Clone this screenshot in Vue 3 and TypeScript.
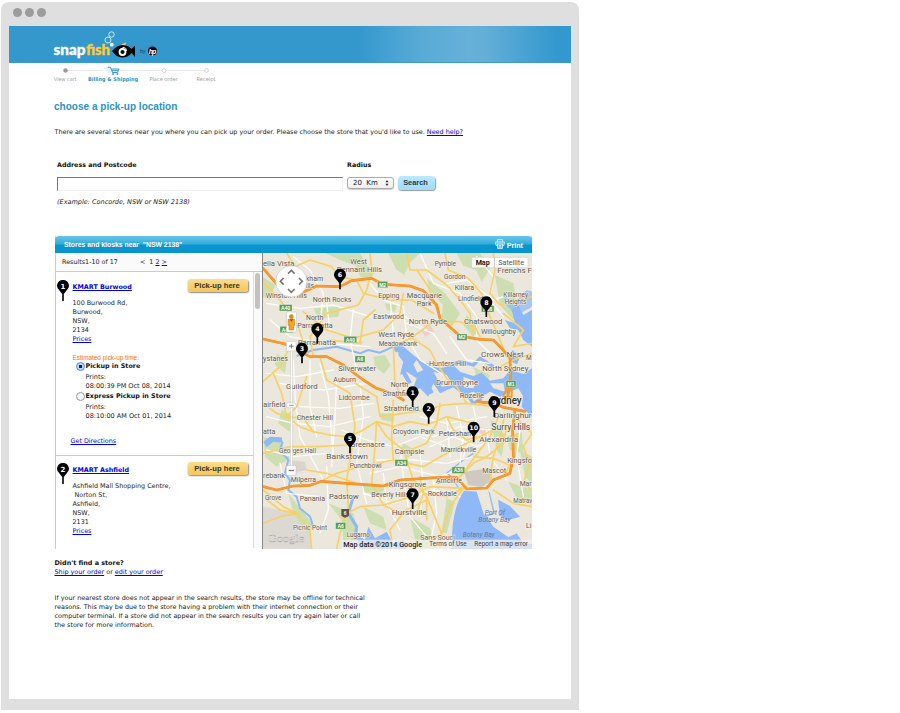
<script setup lang="ts">
interface MapLabel {
  t: string
  x: number
  y: number
  w: number
  s?: number
  k?: string
}
interface Pin {
  n: number
  x: number
  y: number
}

const footerLines: string[] = [
  'If your nearest store does not appear in the search results, the store may be offline for technical',
  'reasons. This may be due to the store having a problem with their internet connection or their',
  'computer terminal. If a store did not appear in the search results you can try again later or call',
  'the store for more information.',
]
const burwood: string[] = ['100 Burwood Rd,', 'Burwood,', 'NSW,', '2134']
const ashfield: string[] = ['Ashfield Mall Shopping Centre,', '\u00a0Norton St,', 'Ashfield,', 'NSW,', '2131']

const labels: MapLabel[] = [
  { t: 'ella Vista', x: 9, y: 47, w: 94 },
  { t: 'West', x: 271, y: 41, w: 50 },
  { t: 'Pennant Hills', x: 230, y: 66, w: 136 },
  { t: 'Baulkham', x: 97, y: 92, w: 92 },
  { t: 'Hills', x: 122, y: 114, w: 40 },
  { t: 'Winston Hills', x: 17, y: 145, w: 124 },
  { t: 'North Rocks', x: 158, y: 155, w: 116 },
  { t: 'Pymble', x: 524, y: 48, w: 64, s: 20 },
  { t: 'Frenchs F', x: 712, y: 68, w: 104 },
  { t: 'Gordon', x: 552, y: 87, w: 64, s: 20 },
  { t: 'Killara', x: 584, y: 121, w: 58, s: 20 },
  { t: 'Lindfield', x: 594, y: 153, w: 76, s: 20 },
  { t: 'Killarney', x: 730, y: 141, w: 74, s: 20 },
  { t: 'Heights', x: 734, y: 162, w: 65, s: 20 },
  { t: 'Epping', x: 355, y: 145, w: 63 },
  { t: 'Macquarie', x: 440, y: 143, w: 106 },
  { t: 'Park', x: 470, y: 167, w: 45 },
  { t: 'North', x: 138, y: 211, w: 52 },
  { t: 'Parramatta', x: 112, y: 234, w: 106 },
  { t: 'Parramatta', x: 113, y: 286, w: 115 },
  { t: 'Eastwood', x: 340, y: 207, w: 92 },
  { t: 'North Ryde', x: 446, y: 221, w: 115, s: 23 },
  { t: 'Chatswood', x: 612, y: 222, w: 115, s: 23 },
  { t: 'Willoughby', x: 663, y: 252, w: 105 },
  { t: 'West Ryde', x: 355, y: 261, w: 107, s: 23 },
  { t: 'Meadowbank', x: 356, y: 288, w: 116, s: 20 },
  { t: 'Crows Nest', x: 663, y: 320, w: 128, s: 23 },
  { t: 'M', x: 798, y: 331, w: 17 },
  { t: 'ystanes', x: 9, y: 334, w: 75 },
  { t: 'Silverwater', x: 235, y: 362, w: 113 },
  { t: 'Hunters Hill', x: 507, y: 347, w: 112 },
  { t: 'North Sydney', x: 667, y: 364, w: 138, s: 23 },
  { t: 'Auburn', x: 220, y: 397, w: 68 },
  { t: 'Guildford', x: 78, y: 417, w: 95 },
  { t: 'North', x: 392, y: 412, w: 52 },
  { t: 'Strathfield', x: 368, y: 437, w: 98 },
  { t: 'Drummoyne', x: 528, y: 405, w: 126 },
  { t: 'Lidcombe', x: 236, y: 450, w: 93 },
  { t: 'Rozelle', x: 599, y: 445, w: 73 },
  { t: 'Sydney', x: 690, y: 463, w: 95, s: 30, k: 'city' },
  { t: 'airfield', x: 10, y: 471, w: 66 },
  { t: 'Strathfield', x: 371, y: 484, w: 106, s: 23 },
  { t: 'Chester Hill', x: 110, y: 511, w: 109 },
  { t: 'Darlinghur', x: 701, y: 505, w: 114, s: 23 },
  { t: 'Surry Hills', x: 694, y: 541, w: 117, s: 25, k: 'dark' },
  { t: 'atta', x: 9, y: 553, w: 37 },
  { t: 'Croydon Park', x: 398, y: 553, w: 126 },
  { t: 'Petersham', x: 536, y: 557, w: 104 },
  { t: 'Alexandria', x: 658, y: 575, w: 117, s: 23 },
  { t: 'Greenacre', x: 271, y: 592, w: 103 },
  { t: 'Georges Hall', x: 57, y: 610, w: 111, s: 19 },
  { t: 'Campsie', x: 404, y: 611, w: 89, s: 23 },
  { t: 'Marrickville', x: 542, y: 605, w: 107 },
  { t: 'Bankstown', x: 199, y: 627, w: 125, s: 24 },
  { t: 'Punchbowl', x: 269, y: 653, w: 96, s: 20 },
  { t: 'Kingsfo', x: 742, y: 640, w: 74 },
  { t: 'Mascot', x: 667, y: 668, w: 71 },
  { t: 'rebank', x: 9, y: 683, w: 66 },
  { t: 'Milperra', x: 92, y: 697, w: 76 },
  { t: 'Kingsgrove', x: 386, y: 711, w: 113, s: 23 },
  { t: 'Arncliffe', x: 528, y: 698, w: 78 },
  { t: 'Mar', x: 779, y: 709, w: 36 },
  { t: 'Grove', x: 15, y: 751, w: 49, s: 19 },
  { t: 'Panania', x: 119, y: 752, w: 76 },
  { t: 'Padstow', x: 207, y: 746, w: 89, s: 23 },
  { t: 'Beverly Hills', x: 334, y: 740, w: 113 },
  { t: 'Rockdale', x: 503, y: 738, w: 87 },
  { t: 'Matrav', x: 760, y: 760, w: 57, s: 19 },
  { t: 'Hurstville', x: 395, y: 795, w: 105, s: 24 },
  { t: 'Port Of', x: 674, y: 795, w: 61, s: 20, k: 'bay' },
  { t: 'Botany Bay', x: 655, y: 817, w: 97, s: 20, k: 'bay' },
  { t: 'Botany Bay', x: 608, y: 862, w: 96, s: 20, k: 'bay' },
  { t: 'Picnic Point', x: 99, y: 839, w: 102, s: 19 },
  { t: 'Li', x: 798, y: 834, w: 16, s: 19 },
  { t: 'Lugarno', x: 260, y: 860, w: 70, s: 20 },
  { t: 'Sans Souci', x: 481, y: 871, w: 104 },
]

const shields: MapLabel[] = [
  { t: 'A40', x: 58, y: 164, w: 38 },
  { t: 'A40', x: 60, y: 229, w: 38 },
  { t: 'M2', x: 353, y: 94, w: 30 },
  { t: 'M2', x: 591, y: 252, w: 30 },
  { t: 'A40', x: 252, y: 259, w: 38 },
  { t: 'A6', x: 285, y: 318, w: 30 },
  { t: 'A38', x: 664, y: 167, w: 38 },
  { t: 'M1', x: 738, y: 392, w: 30 },
  { t: 'A34', x: 405, y: 629, w: 38 },
  { t: 'A36', x: 576, y: 651, w: 38 },
  { t: 'A6', x: 227, y: 818, w: 30 },
]

const pins: Pin[] = [
  { n: 6, x: 240, y: 74 },
  { n: 8, x: 679, y: 157 },
  { n: 4, x: 172, y: 237 },
  { n: 3, x: 126, y: 296 },
  { n: 1, x: 458, y: 427 },
  { n: 2, x: 506, y: 477 },
  { n: 9, x: 703, y: 457 },
  { n: 10, x: 641, y: 533 },
  { n: 5, x: 270, y: 566 },
  { n: 7, x: 458, y: 733 },
]

const parks: string[] = [
  'M195 9 L300 9 320 45 345 65 330 92 300 80 288 48 240 30Z',
  'M385 9 L480 9 450 38 432 75 408 58Z',
  'M590 9 L660 9 690 55 665 95 648 60 610 48Z',
  'M705 75 L760 100 775 190 810 200 800 235 755 205 720 165 712 120Z',
  'M500 85 L555 130 600 190 570 240 545 200 548 165 510 120Z',
  'M160 175 L240 170 235 200 175 205Z',
  'M375 160 L410 165 405 185 380 180Z',
  'M620 195 L655 230 640 262 610 225Z',
  'M340 320 L375 315 392 345 372 372 345 350Z',
  'M50 310 L80 330 75 370 45 345Z',
  'M65 480 L100 500 88 545 55 520Z',
  'M10 560 L60 575 90 625 50 650 15 620Z',
  'M360 490 L400 490 402 515 365 510Z',
  'M560 745 L585 755 560 850 545 848Z',
  'M690 505 L735 555 725 620 710 600Z',
  'M740 560 L785 545 790 610 750 600Z',
  'M300 700 L380 715 355 735 310 725Z',
  'M85 730 L120 775 165 830 140 850 100 790Z',
  'M205 760 L280 790 300 870 250 880 245 810Z',
  'M310 770 L370 800 380 840 330 820Z',
  'M745 695 L816 720 816 765 770 745Z',
  'M430 580 L465 600 445 625 420 605Z',
  'M640 350 L690 375 680 400 650 380Z',
  'M780 600 L816 620 816 700 795 680Z',
  'M9 80 L45 105 30 150 9 140Z',
  'M450 800 L510 835 530 897 470 890Z',
]

const minor: string[] = [
  'M20 160 L120 175 220 165 330 200 420 190 500 240',
  'M30 210 L90 260 200 280 330 290',
  'M100 20 L150 60 190 130 180 230',
  'M330 100 L370 150 430 170 440 260 480 330 560 380',
  'M480 9 L520 100 600 130 650 200 650 270 690 310',
  'M560 100 L620 90 700 150 760 130',
  'M20 370 L110 380 220 360',
  'M100 330 L105 440 120 560 190 690',
  'M60 400 L190 420 320 400',
  'M150 330 L150 470 170 560',
  'M180 340 L205 440 220 620',
  'M230 390 L225 500 215 650',
  'M20 500 L100 520 210 530 330 500',
  'M120 470 L240 475 340 460',
  'M245 540 L320 570 400 590 480 560 560 590',
  'M300 400 L310 500 290 640 320 760',
  'M350 630 L460 630 560 640 640 620',
  'M330 670 L420 650 540 680 620 650',
  'M310 730 L400 760 520 720 600 740',
  'M370 670 L380 760 420 840',
  'M420 590 L430 680 450 800 500 860',
  'M480 610 L490 700 480 800',
  'M520 690 L530 790 510 880',
  'M400 540 L520 560 600 530 690 540',
  'M510 590 L580 560 650 590 720 560',
  'M560 500 L570 620',
  'M590 470 L610 560 600 640',
  'M640 470 L650 520 610 620',
  'M680 540 L690 620 740 690',
  'M480 500 L560 520 680 500',
  'M780 540 L770 620 790 740',
  'M570 260 L620 330 690 340',
  'M440 220 L520 250 560 310',
  'M200 160 L210 240',
  'M280 180 L270 270 290 360',
  'M650 20 L700 80 690 150 730 200',
  'M20 600 L100 620 200 610',
  'M60 640 L80 730 180 740',
  'M200 650 L205 780 180 850',
  'M390 140 L400 250',
]

const roads: string[] = [
  'M9 95 L60 150 115 230 140 310',
  'M80 9 L105 50 150 30 215 50 240 80 290 90 310 130 390 150 455 150 520 190',
  'M330 9 L335 60 320 120 295 165 200 190 150 260 160 320',
  'M440 9 L450 60 500 60 560 105 600 150 630 190 640 250',
  'M470 60 L505 110 535 190',
  'M555 9 L565 60 625 85 665 130 690 200 720 270 740 320',
  'M700 9 L705 60 690 130 720 165 816 140',
  'M660 260 L645 230 600 215 560 215 520 215 460 260 400 290 405 400 425 440',
  'M130 185 L200 240 280 265 370 240 420 190 430 130',
  'M210 270 L300 280 310 210 345 180',
  'M180 320 L200 390 270 430 285 530 275 600 260 690 265 770 240 850 230 897',
  'M9 460 L50 490 80 500 130 505 160 545 210 555 260 560 300 545 350 515 400 530 450 515 500 525 560 500 640 520',
  'M40 370 L65 430 80 500 120 530 160 545',
  'M9 610 L90 590 170 590 265 585',
  'M140 380 L110 470 80 500',
  'M9 395 L60 350 90 290',
  'M350 515 L345 590 335 700 370 765 420 790 500 750',
  'M350 515 L380 560 430 600 460 690 500 740 500 810',
  'M285 400 L350 440 360 500 430 490 500 480 550 465 620 460 700 470',
  'M400 450 L395 560 400 630 490 650 560 610 640 570 700 540',
  'M190 690 L230 670 300 650 400 630',
  'M140 660 L200 670 290 700 400 710',
  'M9 720 L70 770 110 790 150 840 155 897',
  'M110 790 L60 780 20 750',
  'M240 800 L300 770 370 765 440 745 510 710 610 715',
  'M610 715 L570 770 545 850 540 897',
  'M500 740 L520 790 545 850 480 897',
  'M430 790 L390 840 400 897',
  'M490 730 L560 740 620 710',
  'M590 690 L640 640 680 620 730 580 740 530',
  'M600 680 L660 600 690 560 720 490',
  'M640 620 L700 625 760 650',
  'M690 690 L700 620 720 560 735 490',
  'M560 500 L580 540 620 570 650 560',
  'M620 460 L590 410 560 385 530 340 510 300 450 260',
  'M540 460 L530 520 500 580 450 600',
  'M720 350 L760 330 816 310',
  'M765 500 L816 550 790 590 810 640 790 700 816 720',
  'M700 720 L760 760 816 770',
  'M770 550 L765 620 730 680',
  'M730 190 L790 240 760 290 816 280',
  'M480 680 L490 730 470 790 410 790',
  'M9 820 L60 800 110 790',
]

const motorways: string[] = [
  'M9 55 L40 90 70 125 130 126 170 108 240 110 275 92 335 85 370 103 450 108 490 122 530 165 540 205 600 258 660 268 700 270 725 295 750 325 752 400 740 450',
  'M9 267 L75 282 125 308 150 320 200 320 250 345 310 390 350 415 400 432 430 450',
  'M9 710 L50 720 100 708 150 706 185 694 260 700 370 708 420 690 540 682 590 682 620 717 680 714 700 690 750 670 760 620 758 540 765 480',
  'M652 455 L700 460 730 472 795 484',
]
</script>

<template>
  <div class="browser">
    <div class="chrome"><i></i><i></i><i></i></div>
    <div class="page">
      <header class="banner">
        <svg class="logo" viewBox="0 0 108 32" width="108" height="32">
          <text class="brand snap" x="0.500" y="24" textLength="32" lengthAdjust="spacingAndGlyphs">snap</text>
          <text class="brand fish" x="33" y="24" textLength="24" lengthAdjust="spacingAndGlyphs">fish</text>
          <g fill="none" stroke="#d9effb" stroke-width="0.900">
            <circle cx="58.500" cy="3.500" r="2.700" />
            <circle cx="55" cy="9" r="3" />
          </g>
          <circle cx="58.800" cy="13.700" r="1.900" fill="#fff" />
          <path d="M68 14 Q71 11.500 73 11.500 L72 16Z" fill="#fc3" />
          <path d="M59 20 Q64 14 70 14 Q76 14.500 78.500 18 L82 14.500 V26 L78.500 22 Q75 26.500 69 26.500 Q63 26 59 20Z" fill="#050505" />
          <circle cx="69.500" cy="21" r="3" fill="none" stroke="#fff" stroke-width="1.800" />
          <path d="M69.500 16.500 Q73.500 16 73.500 20" fill="none" stroke="#fff" stroke-width="0.900" />
          <text class="by" x="87" y="22" textLength="5.500">by</text>
          <circle cx="99.500" cy="20" r="4.600" fill="#070707" />
          <text class="hp" x="95.800" y="22.500" textLength="7.500">hp</text>
        </svg>
      </header>

      <main>
        <svg class="steps" viewBox="0 0 170 22" width="170" height="22">
          <path d="M12 5.500 H49 M66 5.500 H108 M112 5.500 H150" stroke="#ddd" stroke-width="0.700" />
          <circle cx="11.500" cy="5.500" r="2.200" fill="#999" />
          <circle cx="110" cy="5.500" r="1.900" fill="#fff" stroke="#ccc" stroke-width="0.900" />
          <circle cx="152.500" cy="5.500" r="1.900" fill="#fff" stroke="#ccc" stroke-width="0.900" />
          <path d="M50 3 H55 M52 5 H56 M54 7 H57" stroke="#bfe0f2" stroke-width="0.900" />
          <path d="M54 2.300 H56.500 L58.500 7.500 H63.500 L65 4 H57.500 M58 5.700 H64" fill="none" stroke="#2e93c8" stroke-width="1" />
          <circle cx="59" cy="9" r="0.900" fill="#2e93c8" /><circle cx="63.500" cy="9" r="0.900" fill="#2e93c8" />
          <text x="0" y="15.700" textLength="22.500" lengthAdjust="spacingAndGlyphs">View cart</text>
          <text class="on" x="34" y="15.700" textLength="50" lengthAdjust="spacingAndGlyphs">Billing &amp; Shipping</text>
          <text x="95.500" y="15.700" textLength="28" lengthAdjust="spacingAndGlyphs">Place order</text>
          <text x="142.500" y="15.700" textLength="19" lengthAdjust="spacingAndGlyphs">Receipt</text>
        </svg>

        <h1>choose a pick-up location</h1>
        <p class="intro">There are several stores near you where you can pick up your order. Please choose the store that you'd like to use. <a>Need help?</a></p>

        <form class="search" @submit.prevent>
          <div class="field address">
            <label>Address and Postcode</label>
            <div class="input"></div>
          </div>
          <div class="field">
            <label>Radius</label>
            <div class="controls">
              <div class="select"><span>20&nbsp; Km</span>
                <svg viewBox="0 0 4 6" width="4" height="6"><path d="M2 0 L3.600 2.300 H.4Z M2 6 L3.600 3.700 H.4Z" fill="#333" /></svg>
              </div>
              <button class="go">Search</button>
            </div>
          </div>
        </form>
        <p class="example">(Example: Concorde, NSW or NSW 2138)</p>

        <section class="panel">
          <div class="panel-head">
            <span>Stores and kiosks near &nbsp;"NSW 2138"</span>
            <span class="print">
              <svg viewBox="0 0 10 10" width="10" height="10"><path d="M2.500 3 V.6 H7.500 V3 M1.800 7 Q.6 7 .6 3 H9.400 Q9.400 7 8.200 7 M2.500 5 H7.500 V9.400 H2.500Z M4 6.500 H6 M4 8 H6" fill="#5bbce4" stroke="#d4effa" stroke-width="0.900" /></svg>
              <span>Print</span>
            </span>
          </div>
          <div class="panel-body">
            <div class="list">
              <div class="results"><span>Results1-10 of 17</span><span class="pager">&lt;&nbsp; 1 <a>2</a> <a>&gt;</a></span></div>
              <div class="scroll">
                <div class="items">
                  <article class="store first">
                    <svg class="marker" viewBox="0 0 12 21" width="12" height="21"><path d="M6 0 A5.800 5.800 0 0 1 9.500 10.500 L6.800 14 V21 H5.200 V14 L2.500 10.500 A5.800 5.800 0 0 1 6 0" /><text x="6" y="8.500">1</text></svg>
                    <div class="info">
                      <div class="top"><a class="name">KMART Burwood</a><button class="pick">Pick-up here</button></div>
                      <div v-for="l in burwood" :key="l">{{ l }}</div>
                      <div><a>Prices</a></div>
                      <div class="est">Estimated pick-up time:</div>
                      <div class="opt"><i class="radio checked"></i><b>Pickup in Store</b></div>
                      <div class="when">Prints:<br />08:00:39 PM Oct 08, 2014</div>
                      <div class="opt second"><i class="radio"></i><b>Express Pickup in Store</b></div>
                      <div class="when">Prints:<br />08:10:00 AM Oct 01, 2014</div>
                      <a class="directions">Get Directions</a>
                    </div>
                  </article>
                  <article class="store">
                    <svg class="marker" viewBox="0 0 12 21" width="12" height="21"><path d="M6 0 A5.800 5.800 0 0 1 9.500 10.500 L6.800 14 V21 H5.200 V14 L2.500 10.500 A5.800 5.800 0 0 1 6 0" /><text x="6" y="8.500">2</text></svg>
                    <div class="info">
                      <div class="top"><a class="name">KMART Ashfield</a><button class="pick">Pick-up here</button></div>
                      <div v-for="l in ashfield" :key="l">{{ l }}</div>
                      <div><a>Prices</a></div>
                    </div>
                  </article>
                </div>
                <div class="track"><i></i></div>
              </div>
            </div>

            <svg class="map" viewBox="9 9 807 888" width="269" height="296">
              <rect x="9" y="9" width="807" height="888" fill="#ebe7dc" />
              <path d="M9 770 L110 790 150 840 155 897 9 897Z" fill="#dcd9d2" />
              <path v-for="d in parks" :key="d" :d="d" fill="#cddfb0" />
              <g fill="#f0cfc8"><path d="M480 235 l28 -15 15 25 -28 15z M295 270 l15 5 -8 12z M660 530 l30 8 -8 22 -24 -10z" /></g>
              <g fill="#cfc9c0"><path d="M612 665 L690 655 697 690 665 712 625 705Z" /><path d="M85 630 l50 5 5 25 -40 10z" opacity="0.600" /></g>
              <g fill="#8fb8f6">
                <path d="M612 722 Q572 780 576 897 L816 897 816 882 790 880 770 850 745 862 700 830 680 800 705 790 745 810 780 800 750 768 700 742 685 722 700 790 672 795 650 725Z" />
                <path d="M395 290 L425 285 460 315 500 345 540 355 580 345 600 365 640 378 665 368 690 392 730 385 750 360 790 372 816 355 816 460 790 440 775 415 750 425 720 440 690 425 665 440 640 425 610 435 580 412 540 430 520 400 505 440 480 415 455 425 470 385 440 365 420 375 430 335Z" />
                <path d="M735 210 L765 220 755 180 775 165 790 195 816 180 816 290 790 270 775 240 750 235Z" />
                <path d="M730 135 L760 160 800 120 816 125 816 170 790 185 770 200 735 160Z" opacity="0.700" />
                <path d="M10 575 L30 560 65 562 68 578 40 575 20 592Z" />
                <path d="M285 850 L315 870 325 830 345 865 380 845 400 880 430 870 440 897 300 897Z" />
                <path d="M756 300 l25 18 -10 25 -22 -10z M640 405 l15 15 20 -10 -15 -12z" />
                <path d="M795 390 L816 380 816 500 785 470Z" />
              </g>
              <g fill="#ebe7dc">
                <path d="M520 365 L560 375 580 405 545 410Z M610 380 L650 395 640 415 612 412Z M690 400 L730 400 735 425 700 415Z M400 310 L415 305 415 360 403 350Z" />
                <path d="M690 730 L712 735 720 795 706 795Z M470 330 l20 30 -18 8 -12 -25z" />
              </g>
              <g fill="none" stroke="#8fb8f6" stroke-linejoin="round">
                <path d="M110 318 L160 300 230 290 300 310 325 300 360 308 400 290 430 300" stroke-width="6" />
                <path d="M68 575 L60 600 85 630 75 670 90 690 85 720 110 740 120 775 150 800 160 830" stroke-width="6" />
                <path d="M280 740 L265 790 290 830 285 870" stroke-width="9" />
                <path d="M425 300 L440 325 430 365 450 400 M505 340 L490 385 515 430" stroke-width="13" />
                <path d="M560 350 L600 335 640 345 660 325 700 350 M620 430 L640 460 665 445" stroke-width="10" />
                <path d="M590 690 L560 670 610 630 640 610 M530 700 L580 690 600 720" stroke-width="4" />
              </g>
              <g fill="none" stroke-linejoin="round" stroke-linecap="round">
                <path v-for="d in minor" :key="d" :d="d" stroke="#fdfcf8" stroke-width="4" />
                <path v-for="d in roads" :key="d" :d="d" stroke="#f7d164" stroke-width="5" />
                <path v-for="d in motorways" :key="d" :d="d" stroke="#e98c28" stroke-width="8" />
                <path v-for="d in motorways" :key="d + 'i'" :d="d" stroke="#f99a2b" stroke-width="6" />
                <path d="M730 440 L740 415 752 400 M730 440 H755 V410 M765 480 V500" stroke="#f99a2b" stroke-width="6" />
              </g>
              <g v-for="(s, i) in shields" :key="'s' + i">
                <rect :x="s.x" :y="s.y" :width="s.w" height="19" fill="#5a9c4f" stroke="#e5efdc" stroke-width="1" />
                <text class="shield" :x="s.x + s.w / 2" :y="s.y + 15.500">{{ s.t }}</text>
              </g>
              <path d="M244 777 H267 V795 Q267 800 255 803 Q244 800 244 795Z" fill="#5d5142" />
              <text class="shield" x="255.500" y="796">6</text>
              <text v-for="(l, i) in labels" :key="i" class="place" :class="l.k" :x="l.x" :y="l.y" :font-size="l.s ?? 21.5" :textLength="l.w" lengthAdjust="spacingAndGlyphs">{{ l.t }}</text>

              <g class="pan">
                <circle cx="94" cy="94" r="47" fill="#fff" stroke="#c9c6bf" stroke-width="2" />
                <path d="M84 71 L94 61 104 71 M84 117 L94 127 104 117 M71 84 L61 94 71 104 M117 84 L127 94 117 104" fill="none" stroke="#777" stroke-width="5" />
              </g>
              <g>
                <rect x="79" y="186" width="30" height="60" rx="3" fill="#fff" stroke="#bbb" stroke-width="1.500" />
                <circle cx="94" cy="200" r="7" fill="#e28a17" />
                <path d="M84 208 H104 V226 H101 V240 H87 V226 H84Z" fill="#f3a421" stroke="#b8701a" stroke-width="1.500" />
                <path d="M89 208 L94 216 99 208Z" fill="#b93e1a" />
              </g>
              <g>
                <rect x="92" y="300" width="5" height="352" fill="#fff" stroke="#bbb" stroke-width="1" />
                <rect x="79" y="274" width="29" height="29" rx="2" fill="#fff" stroke="#bbb" stroke-width="1.500" />
                <path d="M87 288.500 H101 M94 281.500 V295.500" stroke="#777" stroke-width="3" />
                <rect x="79" y="459" width="29" height="14" rx="2" fill="#fff" stroke="#bbb" stroke-width="1.500" />
                <path d="M87 466 H101" stroke="#999" stroke-width="3" />
                <rect x="79" y="647" width="29" height="29" rx="2" fill="#fff" stroke="#bbb" stroke-width="1.500" />
                <path d="M86 661.500 H102" stroke="#777" stroke-width="4" />
              </g>
              <g v-for="p in pins" :key="p.n">
                <path :transform="`translate(${p.x} ${p.y})`" d="M0 -18 A18 18 0 0 1 14 11 Q6 20 2.500 26 V44 H-2.500 V26 Q-6 20 -14 11 A18 18 0 0 1 0 -18" fill="#000" />
                <text class="num" :x="p.x" :y="p.y + 7">{{ p.n }}</text>
              </g>
              <g>
                <rect x="635" y="22" width="169" height="31" rx="2" fill="#fff" stroke="#c5c5c5" stroke-width="1.500" />
                <path d="M703.500 22 V53" stroke="#aaa" stroke-width="2" />
                <text class="type sel" x="647" y="46" textLength="42" lengthAdjust="spacingAndGlyphs">Map</text>
                <text class="type" x="715" y="46" textLength="77" lengthAdjust="spacingAndGlyphs">Satellite</text>
              </g>
              <text class="google" x="23" y="877" textLength="110" lengthAdjust="spacingAndGlyphs">Google</text>
              <rect x="246" y="869" width="570" height="28" fill="#f3f3f2" opacity="0.720" />
              <text class="legal main" x="250" y="890" textLength="236" lengthAdjust="spacingAndGlyphs">Map data ©2014 Google</text>
              <text class="legal" x="508" y="889" textLength="112" lengthAdjust="spacingAndGlyphs">Terms of Use</text>
              <text class="legal" x="643" y="889" textLength="161" lengthAdjust="spacingAndGlyphs">Report a map error</text>
            </svg>
          </div>
        </section>

        <footer>
          <b>Didn't find a store?</b>
          <div><a>Ship your order</a> or <a>edit your order</a></div>
          <p><span v-for="l in footerLines" :key="l">{{ l }}</span></p>
        </footer>
      </main>
    </div>
  </div>
</template>

<style>
body { margin: 0; background: #fff; }
</style>

<style scoped>
* { box-sizing: border-box; }
.browser { width: 578px; height: 708px; margin: 2px 0 0 1px; padding: 0 8px 11px; background: #dfdfdf; border-radius: 8px 8px 0 0; font-family: "DejaVu Sans", sans-serif; font-size: 6.400px; line-height: 9px; color: #222; }
.chrome { height: 24px; display: flex; align-items: flex-start; gap: 3px; padding: 6px 0 0 4px; }
.chrome i { width: 9px; height: 9px; border-radius: 50%; background: #9c9c9c; }
.page { height: 673px; background: #fff; }
.banner { height: 37px; padding: 5px 0 0 44px; border-bottom: 1px solid #3b9ad0; background: linear-gradient(90deg, #3498cd 0, #3498cd 350px, #58abd6 412px, #66b0d9 460px, #63afd8 475px, #3398ce 548px, #3398ce 100%); }
.logo { display: block; overflow: visible; }
.brand { font-family: Lato, sans-serif; font-weight: 900; font-size: 14.500px; }
.snap { fill: #fff; stroke: #fff; stroke-width: 0.300px; }
.fish { fill: #fc3; stroke: #fc3; stroke-width: 0.300px; }
.by { font: 5.500px "Liberation Sans", sans-serif; fill: #17445e; }
.hp { font: italic bold 7px "Liberation Sans", sans-serif; fill: #fff; }
main { padding: 2px 0 0 45px; }
a { color: #0000ee; text-decoration: underline; }
p, h1 { margin: 0; }
.steps { display: block; overflow: visible; font: 5.200px "DejaVu Sans", sans-serif; fill: #999; }
.steps .on { font-weight: bold; fill: #2e8fc4; }
h1 { margin-top: 13px; font: bold 10.050px/14px "Liberation Sans", sans-serif; color: #2d92c6; white-space: nowrap; }
.intro { margin: 14px 0 0 0.500px; font-size: 6.430px; white-space: nowrap; }
.search { display: flex; gap: 4px; margin: 23px 0 0 3px; }
.field label { display: block; font-weight: bold; color: #111; font-size: 6.350px; }
.address { width: 286px; }
.input { height: 14px; margin-top: 8px; border: 1px solid #eee; border-top-color: #777; border-left-color: #777; }
.controls { display: flex; gap: 4px; padding-top: 7px; align-items: flex-start; }
.select { width: 47px; height: 12px; margin-top: 1px; padding: 0 4px 0 5px; display: flex; align-items: center; justify-content: space-between; border: 1px solid #aaa; border-radius: 3px; background: linear-gradient(#fff, #eee); box-shadow: 0 1px 1px #ccc; font-size: 7px; color: #111; }
button { padding: 0; border: 0; font: bold 7.200px/11px "Liberation Sans", sans-serif; }
.go { width: 37px; height: 14px; padding: 0 2px 2px 0; border-radius: 4px; background: linear-gradient(#bde8fc, #9bdcfb); box-shadow: 0.500px 1px 1px #999; color: #27394a; font-size: 7.400px; }
.example { margin: 7px 0 0 3px; font-size: 6.500px; font-style: italic; }
.panel { width: 477px; height: 313px; margin: 29px 0 0 1px; border: 1px solid #ccc; border-top: 0; }
.panel-head { height: 17px; margin: 0 -1px; padding: 0 9px; display: flex; align-items: center; justify-content: space-between; border-radius: 4px 4px 0 0; background: linear-gradient(#67c5ea, #35aedb 45%, #0895cf 55%, #0895cf); color: #fff; font: bold 6.850px "Liberation Sans", sans-serif; white-space: nowrap; }
.print { display: flex; align-items: center; gap: 2px; font-size: 7.200px; }
.print svg { margin-bottom: 2px; }
.print span { padding-top: 2px; }
.panel-body { height: 296px; display: flex; }
.list { width: 207px; flex: none; border-right: 1px solid #888; background: #fff; }
.results { height: 19px; padding: 5px 6px 0; display: flex; gap: 22px; border-bottom: 1px solid #ccc; background: #fafafa; }
.scroll { height: 276px; display: flex; }
.items { width: 198px; border-right: 1px solid #ddd; }
.track { width: 8px; padding: 1px 0; background: #fafafa; }
.track i { display: block; width: 5px; height: 36px; margin-left: 1px; border-radius: 3px; background: #c2c2c2; }
.store { display: flex; height: 92px; padding: 6px 5px 0 1px; gap: 4px; }
.first { height: 184px; padding-top: 7px; border-bottom: 1px solid #ccc; }
.marker { flex: none; margin: 1px 0 0 -0.500px; }
.marker text { font: bold 7px "DejaVu Sans", sans-serif; fill: #fff; text-anchor: middle; }
.info { flex: 1; }
.top { display: flex; justify-content: space-between; align-items: flex-start; height: 20px; }
.name { font-weight: bold; padding-top: 4px; }
.pick { width: 60px; height: 13px; border-radius: 3px; background: linear-gradient(#fbdc8c, #f3c75a); box-shadow: 0.500px 1px 1.500px #888; color: #39331f; font-size: 7.600px; line-height: 13px; padding-right: 2px; }
.est { margin-top: 9px; color: #ff6a1a; font: 6.400px/9px "Liberation Sans", sans-serif; }
.opt { display: flex; align-items: center; gap: 1px; padding-left: 3px; color: #111; }
.radio { width: 9px; height: 9px; border-radius: 50%; border: 1px solid #999; background: #f7f7f7; }
.checked { border-color: #5a87b8; background: radial-gradient(circle, #123 0 1.500px, #b3dbfa 2px); }
.when { margin: 2px 0 1px 13px; font-size: 6.500px; }
.directions { display: block; margin: 16px 0 0 -2px; }
.map { display: block; flex: none; }
.place { font-family: Roboto, sans-serif; fill: #62594e; paint-order: stroke; stroke: #f6f3ea; stroke-width: 3px; stroke-linejoin: round; }
.city { fill: #333; font-weight: 500; }
.dark { fill: #444; }
.bay { font-style: italic; fill: #5d78a5; stroke: none; }
.shield { font: bold 15px "Liberation Sans", sans-serif; fill: #fff; text-anchor: middle; }
.num { font: bold 19px "DejaVu Sans", sans-serif; fill: #fff; text-anchor: middle; }
.type { font: 21px Roboto, sans-serif; fill: #555; }
.sel { font-weight: 700; fill: #111; }
.google { font: 34px "Liberation Serif", serif; fill: #fff; stroke: #999; stroke-width: 1px; }
.legal { font: 19px Roboto, sans-serif; fill: #444; }
.legal.main { font-weight: 500; fill: #222; }
footer { padding: 10px 0 0 0.500px; white-space: nowrap; font-size: 6.430px; }
footer b { color: #111; }
footer p { margin-top: 17px; }
footer p span { display: block; }
</style>
